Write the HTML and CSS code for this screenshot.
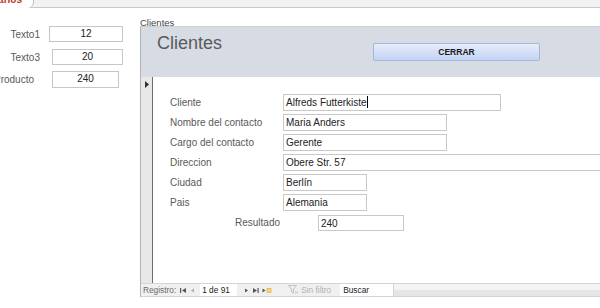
FILE: index.html
```html
<!DOCTYPE html>
<html>
  <head>
    <meta charset="utf-8">
    <title>Clientes</title>
    <link rel="stylesheet" href="styles.css">
  </head>
  <body>
    <div class="tabstrip">
      <div class="tab"><span>Usuarios</span></div>
    </div>
    <div class="main">
      <div class="side">
        <div class="srow r1">
          <span class="slabel">Texto1</span>
          <span class="sbox">12</span>
        </div>
        <div class="srow r2">
          <span class="slabel">Texto3</span>
          <span class="sbox">20</span>
        </div>
        <div class="srow r3">
          <span class="slabel">Producto</span>
          <span class="sbox">240</span>
        </div>
      </div>

      <div class="form">
        <div class="caption">Clientes</div>
        <div class="frame">
          <div class="header">
            <div class="title">Clientes</div>
            <div class="btn">CERRAR</div>
          </div>
          <div class="body">
            <div class="selector">
              <svg width="5" height="7" viewBox="0 0 5 7"><path d="M0 0 L4 3.5 L0 7 Z" fill="#333"/></svg>
            </div>
            <div class="detail">
              <div class="row">
                <span class="label">Cliente</span>
                <span class="box w-cliente">Alfreds Futterkiste<i class="caret"></i></span>
              </div>
              <div class="row">
                <span class="label">Nombre del contacto</span>
                <span class="box w-mid">Maria Anders</span>
              </div>
              <div class="row">
                <span class="label">Cargo del contacto</span>
                <span class="box w-mid">Gerente</span>
              </div>
              <div class="row">
                <span class="label">Direccion</span>
                <span class="box w-long">Obere Str. 57</span>
              </div>
              <div class="row">
                <span class="label">Ciudad</span>
                <span class="box w-short">Berlín</span>
              </div>
              <div class="row">
                <span class="label">Pais</span>
                <span class="box w-short">Alemania</span>
              </div>
              <div class="row result">
                <span class="label">Resultado</span>
                <span class="box w-result">240</span>
              </div>
            </div>
          </div>
          <div class="navbar">
            <span class="nlabel">Registro:</span>
            <svg class="nicon" width="7" height="7" viewBox="0 0 7 7"><rect x="0" y="1" width="1.2" height="5" fill="#555"/><path d="M6 1 L2 3.5 L6 6 Z" fill="#555"/></svg>
            <svg class="nicon dim" width="5" height="7" viewBox="0 0 5 7"><path d="M4 1.5 L1 3.5 L4 5.5 Z" fill="#aaa"/></svg>
            <span class="current">1 de 91</span>
            <svg class="nicon next" width="5" height="7" viewBox="0 0 5 7"><path d="M1 1.5 L4 3.5 L1 5.5 Z" fill="#555"/></svg>
            <svg class="nicon" width="7" height="7" viewBox="0 0 7 7"><path d="M1 1 L5 3.5 L1 6 Z" fill="#555"/><rect x="5.5" y="1" width="1.2" height="5" fill="#555"/></svg>
            <svg class="nicon" width="10" height="7" viewBox="0 0 10 7"><path d="M0.5 1.5 L3.5 3.5 L0.5 5.5 Z" fill="#555"/><rect x="5" y="1.5" width="4" height="4" fill="#f6d27a" stroke="#e0a93a" stroke-width="0.6"/></svg>
            <span class="filter">
              <svg width="11" height="10" viewBox="0 0 11 10"><path d="M0.5 0.5 H8.5 L5.5 4 V8 L3.5 7 V4 Z" fill="none" stroke="#b5b5b5" stroke-width="0.8"/><path d="M7 6 L10 9 M10 6 L7 9" stroke="#c0c0c0" stroke-width="0.8"/></svg>
              Sin filtro
            </span>
            <span class="search">Buscar</span>
            <span class="scroll"></span>
          </div>
        </div>
      </div>
    </div>
  </body>
</html>
```

FILE: styles.css
```css
* {
  margin: 0;
  padding: 0;
  box-sizing: border-box;
}

body {
  width: 600px;
  height: 308px;
  overflow: hidden;
  background: #fff;
  font-family: "Liberation Sans", Arial, sans-serif;
  font-size: 10px;
  color: #222;
}

/* tab strip on top */
.tabstrip {
  height: 8px;
  background: #f2f2f2;
  border-bottom: 1px solid #c9c9c9;
  display: flex;
}

.tab {
  width: 34px;
  height: 8px;
  overflow: hidden;
  background: #fff;
  border-right: 1px solid #bdbdbd;
  border-bottom-right-radius: 6px;
  display: flex;
  justify-content: flex-end;
}

.tab span {
  margin-top: -6px;
  padding-right: 11px;
  font-size: 10px;
  font-weight: bold;
  color: #c0392b;
  white-space: nowrap;
}

.main {
  display: flex;
}

/* left panel */
.side {
  flex: 0 0 140px;
  width: 140px;
  padding-top: 18px;
}

.srow {
  display: flex;
  align-items: center;
  height: 16px;
  margin-bottom: 7px;
}

.r2 {
  margin-bottom: 6px;
}

.slabel {
  flex: 0 0 40px;
  min-width: 0;
  text-align: right;
  white-space: nowrap;
  color: #595959;
  direction: rtl;
}

.sbox {
  height: 16px;
  line-height: 14px;
  border: 1px solid #c6c6c6;
  text-align: center;
}

.r1 .sbox { margin-left: 9px; width: 74px; }
.r2 .sbox { margin-left: 12px; width: 71px; }
.r3 .slabel { flex-basis: 34px; }
.r3 .sbox { margin-left: 18px; width: 67px; height: 17px; }

/* form window */
.form {
  flex: 1;
  min-width: 0;
  overflow: hidden;
}

.caption {
  height: 18px;
  padding-top: 9px;
  font-size: 9.5px;
  color: #444;
}

.frame {
  border-left: 1px solid #b3b3b3;
  border-top: 1px solid #cfcfcf;
}

.header {
  height: 50px;
  background: #d6dbe4;
  display: grid;
  grid-template-columns: 232px 167px;
}

.title {
  padding: 6px 0 0 16px;
  font-size: 18px;
  color: #5a5a5a;
}

.btn {
  margin-top: 16px;
  height: 18px;
  line-height: 16px;
  border: 1px solid #a3b6dc;
  border-radius: 2px;
  background: linear-gradient(#e6edfb, #c3d4f3);
  text-align: center;
  font-size: 8.5px;
  font-weight: bold;
  color: #1a1a1a;
}

.body {
  display: flex;
  height: 206px;
}

.selector {
  flex: 0 0 12px;
  background: #e8e8e8;
  border-right: 1px solid #6e6e6e;
  padding: 4px 0 0 4px;
}

.selector svg {
  display: block;
}

.detail {
  flex: 1;
  padding-top: 17px;
}

.row {
  display: flex;
  align-items: center;
  height: 17px;
  margin-bottom: 3px;
}

.label {
  flex: 0 0 130px;
  padding-left: 17px;
  color: #595959;
  white-space: nowrap;
}

.box {
  flex: none;
  height: 17px;
  line-height: 15px;
  padding-left: 2px;
  border: 1px solid #c8c8c8;
  white-space: nowrap;
}

.caret {
  display: inline-block;
  width: 1px;
  height: 12px;
  background: #000;
  vertical-align: -2px;
}

.w-cliente { width: 218px; }
.w-mid { width: 164px; }
.w-long { width: 340px; }
.w-short { width: 84px; }

.result {
  margin-top: 1px;
}

.result .label {
  flex-basis: 165px;
  padding-left: 82px;
}

.w-result {
  width: 86px;
  height: 16px;
}

/* record navigation bar */
.navbar {
  height: 14px;
  display: flex;
  align-items: center;
  background: #f0f0f0;
  border-top: 1px solid #d4d4d4;
  border-bottom: 1px solid #d4d4d4;
  font-size: 8.3px;
}

.nlabel {
  padding-left: 2px;
  color: #6a6a6a;
  margin-right: 4px;
}

.nicon {
  display: block;
  flex: none;
  margin-right: 3px;
}

.current {
  flex: none;
  width: 37px;
  height: 12px;
  line-height: 12px;
  padding-left: 2px;
  background: #fff;
  margin: 0 7px 0 2px;
  color: #222;
}

.filter {
  flex: none;
  display: flex;
  align-items: center;
  gap: 2px;
  margin-left: 13px;
  color: #b0b0b0;
  width: 52px;
}

.search {
  flex: none;
  width: 54px;
  height: 12px;
  line-height: 12px;
  padding-left: 3px;
  background: #fff;
  border-right: 1px solid #d4d4d4;
  color: #222;
}

.scroll {
  flex: 1;
  height: 12px;
  background: linear-gradient(#f4f4f4 50%, #e6e6e6 50%);
}
```
